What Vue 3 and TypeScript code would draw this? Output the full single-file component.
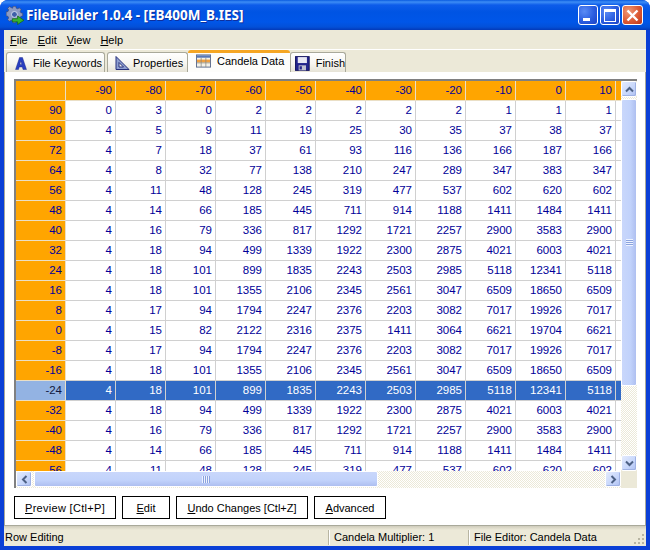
<script setup lang="ts">
const headers: string[] = ['', '-90', '-80', '-70', '-60', '-50', '-40', '-30', '-20', '-10', '0', '10', '']
const rows: { label: string; values: number[] }[] = [
  { label: '90', values: [0, 3, 0, 2, 2, 2, 2, 2, 1, 1, 1] },
  { label: '80', values: [4, 5, 9, 11, 19, 25, 30, 35, 37, 38, 37] },
  { label: '72', values: [4, 7, 18, 37, 61, 93, 116, 136, 166, 187, 166] },
  { label: '64', values: [4, 8, 32, 77, 138, 210, 247, 289, 347, 383, 347] },
  { label: '56', values: [4, 11, 48, 128, 245, 319, 477, 537, 602, 620, 602] },
  { label: '48', values: [4, 14, 66, 185, 445, 711, 914, 1188, 1411, 1484, 1411] },
  { label: '40', values: [4, 16, 79, 336, 817, 1292, 1721, 2257, 2900, 3583, 2900] },
  { label: '32', values: [4, 18, 94, 499, 1339, 1922, 2300, 2875, 4021, 6003, 4021] },
  { label: '24', values: [4, 18, 101, 899, 1835, 2243, 2503, 2985, 5118, 12341, 5118] },
  { label: '16', values: [4, 18, 101, 1355, 2106, 2345, 2561, 3047, 6509, 18650, 6509] },
  { label: '8', values: [4, 17, 94, 1794, 2247, 2376, 2203, 3082, 7017, 19926, 7017] },
  { label: '0', values: [4, 15, 82, 2122, 2316, 2375, 1411, 3064, 6621, 19704, 6621] },
  { label: '-8', values: [4, 17, 94, 1794, 2247, 2376, 2203, 3082, 7017, 19926, 7017] },
  { label: '-16', values: [4, 18, 101, 1355, 2106, 2345, 2561, 3047, 6509, 18650, 6509] },
  { label: '-24', values: [4, 18, 101, 899, 1835, 2243, 2503, 2985, 5118, 12341, 5118] },
  { label: '-32', values: [4, 18, 94, 499, 1339, 1922, 2300, 2875, 4021, 6003, 4021] },
  { label: '-40', values: [4, 16, 79, 336, 817, 1292, 1721, 2257, 2900, 3583, 2900] },
  { label: '-48', values: [4, 14, 66, 185, 445, 711, 914, 1188, 1411, 1484, 1411] },
  { label: '-56', values: [4, 11, 48, 128, 245, 319, 477, 537, 602, 620, 602] },
]
const selectedLabel = '-24'
</script>

<template>
  <div class="window">
    <div class="titlebar">
      <svg class="app-icon" width="19" height="19" viewBox="0 0 18 18">
        <path d="M7 0h3l.4 2 1.700.7 1.700-1.100 2 2-1.100 1.700.7 1.700 2 .4v3l-2 .4-.7 1.700 1.100 1.700-2 2-1.700-1.100-1.700.7-.4 2H7l-.4-2-1.700-.7-1.700 1.100-2-2 1.100-1.700-.7-1.700-2-.4V6l2-.4.7-1.700-1.100-1.700 2-2 1.700 1.100L6.600 2z" fill="#8d9bc4" stroke="#3c4a74" stroke-width=".7" transform="translate(.5 .3) scale(.88)" />
        <circle cx="8" cy="8" r="2.800" fill="#3f5fa8" stroke="#dfe6f5" stroke-width=".8" />
        <path d="M6 12h5V9.500l6 4-6 4V15H6z" fill="#35b52f" stroke="#14641a" stroke-width=".7" />
      </svg>
      <span class="title">FileBuilder 1.0.4 - [EB400M_B.IES]</span>
      <div class="caption-buttons">
        <button class="cap cap-blue" aria-label="Minimize"><span class="min-glyph"></span></button>
        <button class="cap cap-blue" aria-label="Maximize"><span class="max-glyph"></span></button>
        <button class="cap cap-red" aria-label="Close">
          <svg width="13" height="13" viewBox="0 0 13 13"><path d="M1.500 1.500l10 10M11.500 1.500l-10 10" stroke="#fff" stroke-width="2.400" /></svg>
        </button>
      </div>
    </div>

    <div class="client">
      <div class="menubar">
        <span class="menu-item"><u>F</u>ile</span>
        <span class="menu-item"><u>E</u>dit</span>
        <span class="menu-item"><u>V</u>iew</span>
        <span class="menu-item"><u>H</u>elp</span>
      </div>

      <div class="tabs">
        <div class="tab tab-1">
          <svg width="16" height="16" viewBox="0 0 16 16"><path d="M2.500 14.500L6.500 2.500h3l4 12h-3.500l-.7-2.500H6.200l-.7 2.500zM6.900 9.500h1.900L7.800 6z" fill="#2a3fc0" fill-rule="evenodd" stroke="#121f80" stroke-width=".4" /></svg>
          <span>File Keywords</span>
        </div>
        <div class="tab tab-2">
          <svg width="16" height="16" viewBox="0 0 16 16"><path d="M2 1.500v13h13zM5 7.500v4.500h4.500z" fill="#8f9fd0" fill-rule="evenodd" stroke="#27307c" stroke-width="1" /></svg>
          <span>Properties</span>
        </div>
        <div class="tab tab-active">
          <svg width="15" height="14" viewBox="0 0 16 14">
            <rect x=".5" y=".5" width="15" height="13" fill="#f4f2e8" stroke="#5a6a8c" />
            <rect x="1" y="1" width="14" height="2.500" fill="#5878b8" />
            <rect x="1" y="5.500" width="14" height="3" fill="#f0a040" />
            <path d="M5.500 3.500v10M10.500 3.500v10M1 9h14" stroke="#8a8a80" stroke-width=".8" />
          </svg>
          <span>Candela Data</span>
        </div>
        <div class="tab tab-4">
          <svg width="15" height="15" viewBox="0 0 16 16">
            <rect x=".5" y=".5" width="15" height="15" fill="#23248c" stroke="#10105c" />
            <rect x="3" y="1" width="10" height="6.500" fill="#e8e8f4" />
            <rect x="4" y="10" width="8" height="5.500" fill="#c0c0d0" />
            <rect x="5" y="11" width="2.500" height="3.500" fill="#23248c" />
          </svg>
          <span>Finish</span>
        </div>
      </div>

      <div class="panel">
        <div class="grid-frame">
          <div class="table-view">
            <div class="table-row header-row">
              <div v-for="(h, i) in headers" :key="i" class="cell head-cell" :class="{ 'stub-col': i === 12 }">{{ h }}</div>
            </div>
            <div v-for="row in rows" :key="row.label" class="table-row" :class="{ selected: row.label === selectedLabel }">
              <div class="cell row-head">{{ row.label }}</div>
              <div v-for="(v, j) in row.values" :key="j" class="cell data-cell">{{ v }}</div>
              <div class="cell data-cell stub-col"></div>
            </div>
          </div>

          <div class="vscroll">
            <button class="sb-btn" aria-label="Up">
              <svg width="9" height="7" viewBox="0 0 9 7"><path d="M1 5.500l3.500-3.500 3.500 3.500" fill="none" stroke="#4d6185" stroke-width="2" /></svg>
            </button>
            <div class="vtrack">
              <div class="thumb vthumb"><span class="grip-v"></span></div>
            </div>
            <button class="sb-btn" aria-label="Down">
              <svg width="9" height="7" viewBox="0 0 9 7"><path d="M1 1.500l3.500 3.500 3.500-3.500" fill="none" stroke="#4d6185" stroke-width="2" /></svg>
            </button>
          </div>

          <div class="hscroll">
            <button class="sb-btn" aria-label="Left">
              <svg width="7" height="9" viewBox="0 0 7 9"><path d="M5.500 1l-3.500 3.500 3.500 3.500" fill="none" stroke="#4d6185" stroke-width="2" /></svg>
            </button>
            <div class="htrack">
              <div class="thumb hthumb"><span class="grip-h"></span></div>
            </div>
            <button class="sb-btn" aria-label="Right">
              <svg width="7" height="9" viewBox="0 0 7 9"><path d="M1.500 1l3.500 3.500-3.500 3.500" fill="none" stroke="#4d6185" stroke-width="2" /></svg>
            </button>
          </div>
          <div class="corner"></div>
        </div>

        <div class="actions">
          <button class="action act-preview"><u>P</u>review [Ctl+P]</button>
          <button class="action act-edit"><u>E</u>dit</button>
          <button class="action act-undo"><u>U</u>ndo Changes [Ctl+Z]</button>
          <button class="action act-adv"><u>A</u>dvanced</button>
        </div>
      </div>

      <div class="statusbar">
        <div class="status status-1">Row Editing</div>
        <div class="status status-2">Candela Multiplier: 1</div>
        <div class="status status-3">File Editor: Candela Data</div>
        <svg class="size-grip" width="12" height="12" viewBox="0 0 12 12" fill="#b8b5a2">
          <rect x="9" y="1" width="2" height="2" /><rect x="5" y="5" width="2" height="2" /><rect x="9" y="5" width="2" height="2" />
          <rect x="1" y="9" width="2" height="2" /><rect x="5" y="9" width="2" height="2" /><rect x="9" y="9" width="2" height="2" />
        </svg>
      </div>
    </div>
  </div>
</template>

<style>
html, body { margin: 0; background: #fff; }
</style>

<style scoped>
.window {
  width: 650px;
  height: 550px;
  display: flex;
  flex-direction: column;
  box-sizing: border-box;
  background: #0a3fd6;
  border-radius: 8px 8px 0 0;
  overflow: hidden;
  font-family: "Liberation Sans", Arial, sans-serif;
  font-size: 11px;
  color: #000;
}
.titlebar {
  height: 30px;
  flex: none;
  display: flex;
  align-items: center;
  padding: 0 7px 0 6px;
  background: linear-gradient(180deg, #0a5be0 0, #3d8df5 2px, #0d5cea 5px, #0054e3 12px, #0056e8 22px, #0350d8 27px, #0339b8 30px);
}
.app-icon { flex: none; }
.title {
  margin-left: 1px;
  color: #fff;
  font-family: "Noto Sans", "Liberation Sans", sans-serif;
  font-weight: 700;
  font-size: 13.5px;
  text-shadow: 1px 1px 0 #0f2f9c;
  white-space: nowrap;
}
.caption-buttons { margin-left: auto; display: flex; gap: 2px; align-items: center; }
.cap {
  width: 20px;
  height: 20px;
  padding: 0;
  box-sizing: border-box;
  border: 1px solid #fff;
  border-radius: 3px;
  display: flex;
  align-items: center;
  justify-content: center;
  position: relative;
}
.cap-blue { background: radial-gradient(circle at 30% 30%, #5b8cf5 0, #2a5de0 55%, #1c42c4 100%); }
.cap-red { background: radial-gradient(circle at 30% 30%, #ef9a78 0, #dc5a34 55%, #bd3418 100%); width: 21px; }
.min-glyph { position: absolute; left: 4px; bottom: 3px; width: 7px; height: 3px; background: #fff; }
.max-glyph { width: 10px; height: 9px; border: 1px solid #fff; border-top-width: 3px; box-sizing: content-box; }

.client {
  flex: 1;
  min-height: 0;
  margin: 0 4px 4px;
  background: #ece9d8;
  display: flex;
  flex-direction: column;
}
.menubar {
  height: 20px;
  box-sizing: border-box;
  flex: none;
  padding-left: 6px;
  display: flex;
  gap: 10px;
  align-items: center;
  border-bottom: 1px solid #fff;
}
.menu-item { font-size: 11px; }

.tabs {
  height: 22px;
  flex: none;
  display: flex;
  align-items: flex-end;
  padding-left: 2px;
}
.tab {
  height: 20px;
  box-sizing: border-box;
  display: flex;
  align-items: center;
  padding: 1px 0 0 6px;
  border: 1px solid #a9a99a;
  border-bottom: none;
  border-radius: 3px 3px 0 0;
  background: linear-gradient(180deg, #fff 0, #f7f6f0 55%, #e6e3d6 100%);
  font-size: 11px;
  white-space: nowrap;
}
.tab-1 { width: 99px; gap: 4px; margin-right: 2px; }
.tab-2 { width: 81px; gap: 3px; }
.tab-active {
  width: 102px;
  height: 22px;
  gap: 6px;
  padding: 0 0 3px 8px;
  background: #fdfdfb;
  border: none;
  border-top: 3px solid #f5a623;
  border-radius: 3px 3px 0 0;
}
.tab-4 { width: 56px; gap: 6px; padding-left: 4px; }

.panel {
  flex: 1;
  min-height: 0;
  background: #fff;
  padding: 7px 0 0 11px;
  border-bottom: 1px solid #a9a99a;
  border-right: 1px solid #a9a99a;
  border-left: 1px solid #a9a99a;
  box-sizing: border-box;
  display: flex;
  flex-direction: column;
}
.grid-frame {
  width: 623px;
  height: 409px;
  flex: none;
  box-sizing: border-box;
  border-top: 2px solid #808080;
  border-left: 2px solid #808080;
  display: grid;
  grid-template-columns: 605px 16px;
  grid-template-rows: 390px 17px;
  margin-left: -2px;
}
.table-view { overflow: hidden; background: #fff; }
.table-row { display: flex; height: 20px; box-sizing: border-box; }
.cell {
  flex: none;
  width: 50px;
  height: 20px;
  box-sizing: border-box;
  padding: 0 3px 0 0;
  text-align: right;
  line-height: 19px;
  color: #000098;
  font-size: 11.5px;
  border-right: 1px solid #d0d0d0;
  border-bottom: 1px solid #d0d0d0;
  background: #fff;
}
.stub-col { width: 5px; border-right: none; padding: 0; }
.head-cell, .row-head { background: #ffa500; border-color: #eadfc6; }
.selected .data-cell { background: #316ac5; color: #fff; border-color: #d0d0d0; }
.selected .row-head { background: #93b3e3; color: #101840; }

.sb-btn {
  width: 16px;
  height: 16px;
  flex: none;
  padding: 0;
  box-sizing: border-box;
  border: 1px solid #fff;
  border-radius: 2px;
  background: linear-gradient(135deg, #e4ebfd 0, #c6d6fb 60%, #aebff0 100%);
  box-shadow: inset -1px -1px 0 #9fb2e4;
  display: flex;
  align-items: center;
  justify-content: center;
}
.vscroll { display: flex; flex-direction: column; background: #ece9d8; }
.vtrack, .htrack {
  flex: 1;
  min-width: 0;
  min-height: 0;
  display: flex;
  background: repeating-conic-gradient(#ece9d8 0 25%, #fff 0 50%) 0 0 / 2px 2px;
}
.vtrack { flex-direction: column; }
.hscroll { display: flex; align-items: flex-start; background: repeating-conic-gradient(#ece9d8 0 25%, #fff 0 50%) 0 0 / 2px 2px; }
.thumb {
  box-sizing: border-box;
  border: 1px solid #fff;
  border-radius: 2px;
  display: flex;
  align-items: center;
  justify-content: center;
  flex: none;
}
.vthumb {
  width: 16px;
  height: 287px;
  margin-top: 2px;
  background: linear-gradient(90deg, #c9d7fb, #c1d2fb 60%, #aebff0);
}
.hthumb {
  width: 344px;
  height: 16px;
  margin-left: 2px;
  background: linear-gradient(180deg, #c9d7fb, #c1d2fb 60%, #aebff0);
}
.grip-v {
  width: 7px;
  height: 7px;
  background: repeating-linear-gradient(180deg, #eef3ff 0 1px, #8ba3de 1px 2px);
}
.grip-h {
  width: 8px;
  height: 7px;
  background: repeating-linear-gradient(90deg, #eef3ff 0 1px, #8ba3de 1px 2px);
}
.corner { background: #ece9d8; }

.actions {
  display: flex;
  gap: 6px;
  margin-top: 8px;
  margin-left: -2px;
}
.action {
  height: 23px;
  box-sizing: border-box;
  padding: 0;
  border: 1px solid #000;
  background: #fff;
  font: inherit;
  font-size: 11px;
  color: #000;
  white-space: nowrap;
}
.act-preview { width: 102px; letter-spacing: .3px; }
.act-edit { width: 48px; }
.act-undo { width: 132px; }
.act-adv { width: 72px; }

.statusbar {
  height: 20px;
  flex: none;
  display: flex;
  align-items: center;
  position: relative;
  padding-top: 2px;
  font-size: 11px;
  box-sizing: border-box;
  background: linear-gradient(180deg, #cfccbc 0, #ece9d8 4px);
}
.status { box-sizing: border-box; white-space: nowrap; line-height: 15px; }
.status-1 { width: 324px; padding-left: 1px; }
.status-2 { width: 140px; padding-left: 5px; border-left: 1px solid #b8b5a2; box-shadow: inset 1px 0 0 #fff; }
.status-3 { flex: 1; padding-left: 5px; border-left: 1px solid #b8b5a2; box-shadow: inset 1px 0 0 #fff; }
.size-grip { position: absolute; right: 1px; bottom: 1px; }
</style>
